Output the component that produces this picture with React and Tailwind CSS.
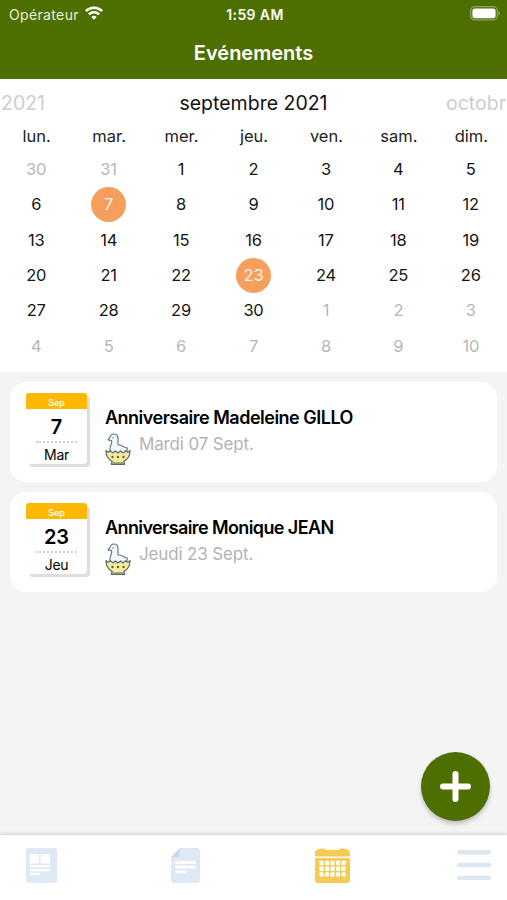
import clsx from 'clsx'

const WEEKDAYS = ['lun.', 'mar.', 'mer.', 'jeu.', 'ven.', 'sam.', 'dim.']
const MARKED = [7, 23]

// six weeks, starting on monday 30 august
const DAYS = [
    ...[30, 31].map((day) => ({ day, outside: true })),
    ...Array.from({ length: 30 }, (_, i) => ({ day: i + 1, outside: false })),
    ...Array.from({ length: 10 }, (_, i) => ({ day: i + 1, outside: true })),
]

const EVENTS = [
    { month: 'Sep', day: '7', weekday: 'Mar', title: 'Anniversaire Madeleine GILLO', date: 'Mardi 07 Sept.', titleClass: 'tracking-[-0.5px]' },
    { month: 'Sep', day: '23', weekday: 'Jeu', title: 'Anniversaire Monique JEAN', date: 'Jeudi 23 Sept.', titleClass: 'tracking-[-0.6px]' },
]

function WifiIcon() {
    return (
        <svg width="18" height="14" viewBox="0 0 18 14" fill="none" stroke="#fff" strokeWidth="2.5">
            <path d="M.9 5.1a11.5 11.5 0 0 1 16.2 0" />
            <path d="M3.9 8.3a7.2 7.2 0 0 1 10.2 0" />
            <path d="M9 13.8 6.3 11a3.9 3.9 0 0 1 5.4 0Z" fill="#fff" stroke="none" />
        </svg>
    )
}

function BatteryIcon() {
    return (
        <svg width="31" height="15" viewBox="0 0 31 15">
            <rect x=".7" y=".7" width="26.6" height="13.2" rx="4" fill="none" stroke="#8fa663" strokeWidth="1.2" />
            <rect x="2.4" y="2.4" width="23.2" height="9.8" rx="2.3" fill="#fff" />
            <path d="M28.5 5.1c2 .7 2 3.7 0 4.4Z" fill="#8fa663" />
        </svg>
    )
}

function ChickIcon() {
    return (
        <svg width="26" height="33" viewBox="0 0 26 33" strokeLinejoin="round" strokeLinecap="round">
            <path
                d="M5 21V15.500c0-2.500 1.700-4 1.700-6.700L6.500 7.600 3 6.800l1.800-2.200C5.400 2.300 7 1 9 1c2.700 0 4 1.900 4 4.500v6.300c3.600-.4 5.500 2.900 9.500 3.200-.2 2.500-1 4.500-3 6Z"
                fill="#f1f7fa"
                stroke="#677985"
                strokeWidth="1.2"
            />
            <circle cx="8" cy="4.900" r=".6" fill="#3e4e59" />
            <path
                d="M1 17.500 3 19.400l2.300-1.700 2.500 2.200 2.600-2 2.600 2 2.600-2 2.600 2 2.500-2.200 2.300 1.700 2-1.900c.2 5-2.600 9-6.200 11l.9 2.800H6.300l.9-2.800C3.600 26.500.8 22.500 1 17.500Z"
                fill="#f9eb9c"
                stroke="#576971"
                strokeWidth="1.2"
            />
            <path d="M8 30h10" stroke="#576971" strokeWidth="1.2" />
            <g fill="#6c5d4a">
                <circle cx="7.500" cy="24" r="1.200" />
                <circle cx="13" cy="24" r="1.200" />
                <circle cx="18.500" cy="24" r="1.200" />
            </g>
        </svg>
    )
}

function NewsIcon() {
    return (
        <svg width="31" height="35" viewBox="0 0 31 35">
            <rect width="31" height="35" rx="3" fill="#dfe8f5" />
            <g fill="#fff">
                <rect x="3.5" y="6" width="9.7" height="9.5" rx="1.5" />
                <rect x="14.5" y="6" width="9.7" height="9.5" rx="1.5" />
                <rect x="3.5" y="17" width="20.7" height="2.3" rx="1" />
                <rect x="3.5" y="21" width="20.7" height="2.3" rx="1" />
                <rect x="3.5" y="24.8" width="10.5" height="2.3" rx="1" />
            </g>
        </svg>
    )
}

function DocumentIcon() {
    return (
        <svg width="29" height="35" viewBox="0 0 29 35">
            <path d="M8.5 0H26a3 3 0 0 1 3 3v29a3 3 0 0 1-3 3H3a3 3 0 0 1-3-3V9Z" fill="#dfe8f5" />
            <path d="M8.7.3V6a3 3 0 0 1-3 3H.5Z" fill="#c9d7e8" />
            <path d="M5.5 14.500h18M5.500 19.200h18M5.500 23.800h9" stroke="#fff" strokeWidth="2.800" strokeLinecap="round" />
        </svg>
    )
}

function CalendarIcon() {
    return (
        <svg width="35" height="35" viewBox="0 0 35 35">
            <path d="M0 8.500V5c0-2.300 1.700-3.700 4-3.700C5.500.3 9.500 0 11 1.700h13C25.500 0 29.500.3 31 1.300c2.300 0 4 1.400 4 3.700v3.500Z" fill="#f4cb55" />
            <path d="M0 10h35v21.500a3.500 3.500 0 0 1-3.500 3.500h-28A3.500 3.500 0 0 1 0 31.500Z" fill="#f4cb55" />
            <g fill="#fff">
                {[12.8, 18.5, 24.2].map((y) =>
                    [4.5, 10, 15.5, 21, 26.5].map((x) => (
                        <rect key={`${x}-${y}`} x={x} y={y} width="4.1" height="4.4" rx=".8" />
                    ))
                )}
            </g>
        </svg>
    )
}

function MenuIcon() {
    return (
        <svg width="34" height="32" viewBox="0 0 34 32" stroke="#dde7f3" strokeWidth="4.4" strokeLinecap="round">
            <path d="M2.2 3.200h29.600M2.200 16h29.600M2.200 28.900h29.600" />
        </svg>
    )
}

function DateBadge({ month, day, weekday }) {
    return (
        <div className="h-[74px] w-[64px] shrink-0">
            <div className="flex h-[71px] w-[61px] flex-col items-center rounded-[4px] bg-white text-black shadow-[3px_3px_0_#dedede]">
                <div className="h-[16px] w-full rounded-t-[3px] bg-[#ffb800] pt-px text-center text-[9px] font-medium leading-[17px] text-white">{month}</div>
                <div className="mt-[6px] h-[24px] text-[20px] font-semibold leading-[24px]">{day}</div>
                <div className="mt-[2px] w-[41px] border-t-2 border-dotted border-[#cfcfcf]" />
                <div className="mt-[2px] text-[14px] leading-[20px] tracking-[-0.3px]">{weekday}</div>
            </div>
        </div>
    )
}

function EventCard({ event }) {
    return (
        <article className="flex h-[100px] rounded-[16px] bg-white pl-[16px] pt-[11px]">
            <DateBadge month={event.month} day={event.day} weekday={event.weekday} />
            <div className="ml-[15px] pt-[13px]">
                <h2 className={clsx('whitespace-nowrap text-[18px] font-semibold leading-[24px] text-black', event.titleClass)}>{event.title}</h2>
                <div className="mt-[3px] flex items-start gap-[8px]">
                    <ChickIcon />
                    <span className="text-[17px] leading-[23px] tracking-[-0.15px] text-[#b3b3b3]">{event.date}</span>
                </div>
            </div>
        </article>
    )
}

function DayCell({ day, outside }) {
    const marked = !outside && MARKED.includes(day)
    return (
        <div className="flex items-center justify-center">
            <span
                className={clsx(
                    'flex size-[35px] items-center justify-center rounded-full text-[16.5px] tracking-[-0.2px]',
                    marked && 'bg-[#f4a05c] text-[#fff3e8]',
                    outside && 'text-[#b7b7b7]',
                    !marked && !outside && 'text-[#151515]'
                )}
            >
                {day}
            </span>
        </div>
    )
}

export default function App() {
    return (
        <div className="flex h-[900px] w-[507px] flex-col overflow-hidden bg-[#f4f4f4] font-['Inter',sans-serif]">
            <header className="h-[79px] shrink-0 bg-[#4c6f00] text-white">
                <div className="grid h-[28px] grid-cols-3 items-center pl-[9px] pr-[6px]">
                    <div className="flex items-center gap-[6px]">
                        <span className="text-[14px] tracking-[0.35px] text-[#e9f0dc]">Opérateur</span>
                        <div className="-mt-[2px]">
                            <WifiIcon />
                        </div>
                    </div>
                    <span className="text-center text-[14px] font-semibold tracking-[0.4px]">1:59 AM</span>
                    <div className="-mt-[2px] flex justify-end">
                        <BatteryIcon />
                    </div>
                </div>
                <h1 className="pt-px text-center text-[20px] font-semibold leading-[48px]">Evénements</h1>
            </header>

            <section className="h-[293px] shrink-0 bg-white">
                <div className="flex h-[49px] items-center justify-between text-[19.5px]">
                    <span className="w-[90px] pl-px text-[#cdcdcd]">2021</span>
                    <span className="text-[#111]">septembre 2021</span>
                    <span className="w-[90px] whitespace-nowrap pl-[29px] text-[#cdcdcd]">octobr</span>
                </div>
                <div className="grid h-[23.5px] grid-cols-7">
                    {WEEKDAYS.map((name) => (
                        <span key={name} className="pl-px text-center text-[16.5px] leading-[17px] text-[#222]">{name}</span>
                    ))}
                </div>
                <div className="grid h-[212.4px] grid-cols-7 grid-rows-6">
                    {DAYS.map((cell, i) => (
                        <DayCell key={i} day={cell.day} outside={cell.outside} />
                    ))}
                </div>
            </section>

            <main className="relative flex flex-1 flex-col gap-[10px] p-[10px]">
                {EVENTS.map((event) => (
                    <EventCard key={event.title} event={event} />
                ))}
                <button
                    type="button"
                    aria-label="Ajouter"
                    className="absolute bottom-[14px] right-[17px] flex size-[69px] items-center justify-center rounded-full bg-[#4c6f00] shadow-[0_3px_4px_rgba(0,0,0,0.22)]"
                >
                    <svg width="31" height="31" viewBox="0 0 31 31" stroke="#fff" strokeWidth="6" strokeLinecap="round">
                        <path d="M15.5 3v25M3 15.500h25" />
                    </svg>
                </button>
            </main>

            <nav className="relative flex h-[65px] shrink-0 items-start bg-white pl-[26px] pr-[16px] pt-[13px] shadow-[0_-1px_4px_rgba(0,0,0,0.16)]">
                <NewsIcon />
                <div className="ml-[114px]">
                    <DocumentIcon />
                </div>
                <div className="ml-[115px]">
                    <CalendarIcon />
                </div>
                <div className="ml-auto mt-px">
                    <MenuIcon />
                </div>
            </nav>
        </div>
    )
}
